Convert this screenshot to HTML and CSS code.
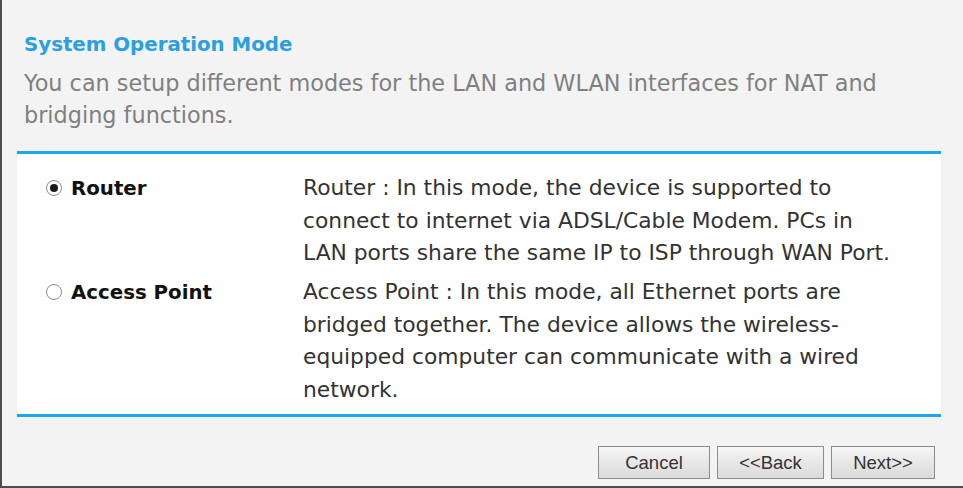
FILE: index.html
```html
<!DOCTYPE html>
<html>
<head>
<meta charset="utf-8">
<link rel="stylesheet" href="styles.css">
</head>
<body>
<div class="frame">
  <div class="intro">
    <h1 class="title">System Operation Mode</h1>
    <p class="lead">You can setup different modes for the LAN and WLAN interfaces for NAT and<br>bridging functions.</p>
  </div>
  <div class="panel">
    <div class="mode">
      <label class="choice"><span class="radio checked"></span><span class="name">Router</span></label>
      <p class="desc">Router : In this mode, the device is supported to<br>connect to internet via ADSL/Cable Modem. PCs in<br>LAN ports share the same IP to ISP through WAN Port.</p>
    </div>
    <div class="mode">
      <label class="choice"><span class="radio"></span><span class="name">Access Point</span></label>
      <p class="desc">Access Point : In this mode, all Ethernet ports are<br>bridged together. The device allows the wireless-<br>equipped computer can communicate with a wired<br>network.</p>
    </div>
  </div>
  <div class="actions">
    <button class="btn btn-cancel">Cancel</button>
    <button class="btn btn-back">&lt;&lt;Back</button>
    <button class="btn btn-next">Next&gt;&gt;</button>
  </div>
</div>
</body>
</html>
```
FILE: styles.css
```css
html, body {
  margin: 0;
  padding: 0;
  background: #f3f3f3;
}
.frame {
  width: 963px;
  height: 488px;
  box-sizing: border-box;
  border-left: 2px solid #4d4d4d;
  border-bottom: 2px solid #4d4d4d;
  background: #f3f3f3;
  padding: 0 22px 0 15px;
  font-family: "DejaVu Sans", sans-serif;
}
.intro {
  padding: 30px 0 0 7px;
  height: 151px;
  box-sizing: border-box;
}
.title {
  margin: 0;
  font-size: 19.8px;
  line-height: 30px;
  font-weight: bold;
  color: #2aa0e2;
}
.lead {
  margin: 7px 0 0;
  font-size: 22.35px;
  line-height: 32px;
  color: #808080;
  white-space: nowrap;
}
.panel {
  height: 266px;
  box-sizing: border-box;
  background: #ffffff;
  border-top: 3px solid #1ba8ea;
  border-bottom: 3px solid #1ba8ea;
  padding: 18px 0 0 30px;
}
.mode {
  display: flex;
  margin-bottom: 6.5px;
}
.choice {
  width: 256px;
  display: flex;
  align-items: center;
  height: 32.5px;
  flex: none;
}
.radio {
  width: 16px;
  height: 16px;
  box-sizing: border-box;
  border: 1.8px solid #8a8a8a;
  border-radius: 50%;
  margin-right: 9px;
  margin-left: -1px;
  display: flex;
  align-items: center;
  justify-content: center;
  background: #fff;
  flex: none;
}
.radio.checked::after {
  content: "";
  width: 8px;
  height: 8px;
  border-radius: 50%;
  background: #1a1a1a;
}
.name {
  font-size: 19.8px;
  font-weight: bold;
  color: #111;
}
.desc {
  margin: 0;
  font-size: 21.8px;
  line-height: 32.5px;
  color: #333;
  white-space: nowrap;
}
.actions {
  display: flex;
  justify-content: flex-end;
  gap: 7px;
  padding: 29px 6px 0 0;
}
.btn {
  height: 33px;
  font-family: "Liberation Sans", Arial, sans-serif;
  font-size: 18.5px;
  color: #333;
  background: linear-gradient(#f5f5f5, #dadada);
  border: 1px solid #8c8c8c;
  border-radius: 0;
  padding: 0;
}
.btn-cancel { width: 112px; }
.btn-back { width: 107px; }
.btn-next { width: 104px; }
```
